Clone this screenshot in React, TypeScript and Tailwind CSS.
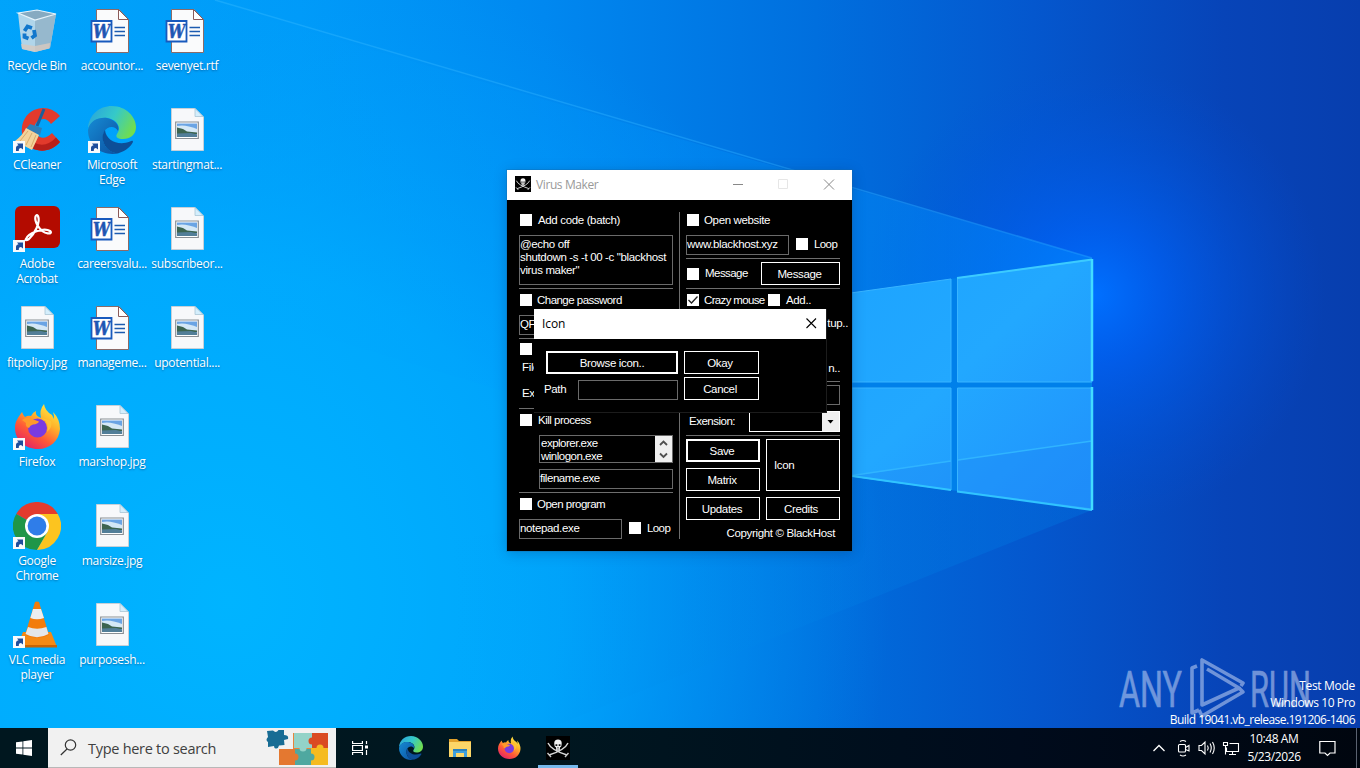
import type { ReactNode } from 'react';

const ui = "font-['Open_Sans','Noto_Sans',sans-serif]";

function Wallpaper() {
  return (
    <svg className="absolute inset-0" width="1360" height="768" viewBox="0 0 1360 768">
      <defs>
        <linearGradient id="base" x1="0" y1="0" x2="1" y2="0">
          <stop offset="0" stopColor="#00a4fb" />
          <stop offset=".22" stopColor="#009af9" />
          <stop offset=".4" stopColor="#0088f0" />
          <stop offset=".6" stopColor="#006fde" />
          <stop offset=".76" stopColor="#0457ce" />
          <stop offset=".9" stopColor="#0744b8" />
          <stop offset="1" stopColor="#073eae" />
        </linearGradient>
        <radialGradient id="glow" gradientUnits="userSpaceOnUse" cx="1095" cy="295" r="230">
          <stop offset="0" stopColor="#0070ff" />
          <stop offset=".3" stopColor="#0062f8" stopOpacity=".7" />
          <stop offset="1" stopColor="#0050d8" stopOpacity="0" />
        </radialGradient>
        <radialGradient id="low" gradientUnits="userSpaceOnUse" cx="230" cy="600" r="660">
          <stop offset="0" stopColor="#00b4ff" />
          <stop offset=".5" stopColor="#00aeff" stopOpacity=".75" />
          <stop offset="1" stopColor="#009cf8" stopOpacity="0" />
        </radialGradient>
        <linearGradient id="beam" gradientUnits="userSpaceOnUse" x1="200" y1="0" x2="1092" y2="0">
          <stop offset="0" stopColor="#00a8ff" stopOpacity="0" />
          <stop offset=".5" stopColor="#0098ff" stopOpacity=".5" />
          <stop offset="1" stopColor="#008cff" stopOpacity=".9" />
        </linearGradient>
        <linearGradient id="ray" gradientUnits="userSpaceOnUse" x1="200" y1="0" x2="1092" y2="0">
          <stop offset="0" stopColor="#30b8ff" stopOpacity=".45" />
          <stop offset="1" stopColor="#20a0ff" stopOpacity=".5" />
        </linearGradient>
        <linearGradient id="floor" gradientUnits="userSpaceOnUse" x1="450" y1="0" x2="1092" y2="0">
          <stop offset="0" stopColor="#0098f0" stopOpacity="0" />
          <stop offset="1" stopColor="#0074e0" stopOpacity=".4" />
        </linearGradient>
        <linearGradient id="pane" gradientUnits="userSpaceOnUse" x1="850" y1="260" x2="1092" y2="510">
          <stop offset="0" stopColor="#1da4ff" />
          <stop offset=".45" stopColor="#22a8ff" />
          <stop offset="1" stopColor="#2090fc" />
        </linearGradient>
      </defs>
      <rect width="1360" height="768" fill="url(#base)" />
      <rect width="1360" height="768" fill="url(#glow)" />
      <rect width="1360" height="768" fill="url(#low)" />
      <path d="M200 0 1092 258V510L600 420 200 300Z" fill="url(#beam)" opacity=".55" />
      <path d="M1092 510 850 476 450 540V768Z" fill="url(#floor)" />
      <path d="M215 0 1092 258" stroke="url(#ray)" strokeWidth="1.500" />
      <path d="M700 316 1092 258V510L700 455Z" fill="#0080ea" />
      <g fill="url(#pane)" stroke="#38b4ff" strokeWidth="1">
        <path d="M700 314 951 279V382H700Z" />
        <path d="M957.500 278 1092 260V382H957.500Z" />
        <path d="M700 388H951V490L700 455Z" />
        <path d="M957.500 388H1092V509L957.500 491Z" />
      </g>
      <path d="M852 476 951 461.500V490ZM958 460.500 1092 441V510L958 491Z" fill="#1c84f4" opacity=".35" />
      <path d="M852 475.500 951 461M958 460 1092 441" stroke="#30b4ff" strokeWidth="1.500" fill="none" />
      <path d="M957 278 1092 259.500" stroke="#3ccbff" strokeWidth="2" />
      <path d="M852 476 951 490M957 491.500 1092 510" stroke="#30c4ff" strokeWidth="2" fill="none" />
      <path d="M1092 259V381M1092 387V510" stroke="#42dcff" strokeWidth="2.500" fill="none" />
    </svg>
  );
}

function Shortcut() {
  return (
    <g>
      <path d="M0 35H12V47H0Z" fill="#f8fafc" />
      <path d="M3 45V41.500Q3.200 39.500 5.500 39.300L4 37.500H10V43.500L8 42Q5.500 42.200 5.800 45Z" fill="#1f4e9c" />
    </g>
  );
}

function Icon48({ children }: { children: ReactNode }) {
  return (
    <svg width="48" height="48" viewBox="0 0 48 48" className="ml-[13px] block shrink-0">
      {children}
    </svg>
  );
}

function RecycleBin() {
  return (
    <Icon48>
      <path d="M5 6 9 42 22 45 37 41 43 7 22 13Z" fill="#c3dae8" opacity=".9" />
      <path d="M22 12 43 7 37 41 22 45Z" fill="#94b5ca" opacity=".9" />
      <path d="M8 37 22 39 37 36 36.500 41.500 22 45 9 42Z" fill="#d8c9bf" opacity=".8" />
      <path d="M5 6 24 3 43 7 22 13Z" fill="#86aac1" stroke="#e8f4fb" strokeWidth="1.200" />
      <g fill="none" stroke="#1277cc" strokeWidth="3.800">
        <path d="M11.500 24 14.500 19.500 19 21" />
        <path d="M21 23 22 28.500 18.500 31" />
        <path d="M15.500 31.500 11.500 30 11.500 26.500" />
      </g>
    </Icon48>
  );
}

function WordFile() {
  return (
    <Icon48>
      <path d="M8.500 2.500H31L40.500 12.500V45.500H8.500Z" fill="#fafbfc" stroke="#8b6b68" strokeWidth="1" />
      <path d="M30.500 2.500V12.500H40.500Z" fill="#fff" stroke="#8b5a58" strokeWidth="1" />
      <path d="M26.500 20.500H37M26.500 24.500H37M26.500 28.500H37" stroke="#1c5bb0" strokeWidth="1.400" />
      <path d="M3.500 14H23.500V34.500H3.500Z" fill="#fff" stroke="#185abd" strokeWidth="1.800" />
      <text x="13.600" y="30.500" textAnchor="middle" textLength="17" lengthAdjust="spacingAndGlyphs" fontFamily="DejaVu Serif, serif" fontWeight="700" fontStyle="italic" fontSize="18" fill="#1f56b3" stroke="#1f56b3" strokeWidth=".5">W</text>
    </Icon48>
  );
}

function ImageFile() {
  return (
    <Icon48>
      <path d="M8.500 2.500H32L40.500 11V44.500H8.500Z" fill="#f7f8fa" stroke="#c7d0d8" strokeWidth="1" />
      <path d="M32 2.500V10.500H40Z" fill="#d4eefc" stroke="#a8c4d4" strokeWidth=".8" />
      <path d="M12.700 16H35.300V32.500H12.700Z" fill="#fff" stroke="#8a8f94" strokeWidth="1.200" />
      <path d="M14 17.500H34V31H14Z" fill="#6aa4e4" />
      <path d="M14 20Q22 18 34 23V27H14Z" fill="#d4e8f6" />
      <path d="M14 21.500 20 23 24 25.500 34 26.500V28H14Z" fill="#3c6450" />
      <path d="M14 27.500 28 27 34 28.500V31H14Z" fill="#527e98" />
    </Icon48>
  );
}

function CCleaner() {
  return (
    <Icon48>
      <path d="M47 10Q36-2 21 4C8 10 6 27 12 36 20 47 37 48 47 36L39 27Q30 36 23 28 19 17 27 14 33 11 38 18Z" fill="#e23a2c" />
      <path d="M12 36C20 47 37 48 47 36L43 31.500Q32 43 20 36Z" fill="#b81f1a" />
      <path d="M31 3 24 20" stroke="#1d5f9b" strokeWidth="3" />
      <path d="M17 18 29 22 27 29 13 23Z" fill="#2f7fb9" />
      <path d="M13 22 26 29Q21 40 19 44L2 35Q10 29 13 22Z" fill="#f3d39c" />
      <path d="M15 25 7 35M19 27 13 39M23 29 18 41" stroke="#d9ac6c" strokeWidth="1" />
      <Shortcut />
    </Icon48>
  );
}

function EdgeArt({ id }: { id: string }) {
  return (
    <>
      <defs>
        <linearGradient id={id + 't'} x1="0" y1=".2" x2="1" y2=".6">
          <stop offset="0" stopColor="#2aa5dc" />
          <stop offset=".5" stopColor="#35c9c9" />
          <stop offset="1" stopColor="#72de4c" />
        </linearGradient>
        <linearGradient id={id + 'b'} x1="0" y1="0" x2="1" y2="1">
          <stop offset="0" stopColor="#168bd4" />
          <stop offset="1" stopColor="#0c50a0" />
        </linearGradient>
      </defs>
      <path d="M0 22C1 9 11 0 24 0 38 0 48 11 48 21 48 29 42 33 35 33 30 33 27 31 29 28 34 21 29 14 20 12 11 11 4 15 0 22Z" fill={`url(#${id}t)`} />
      <path d="M0 24C2 14 11 11 19 12 28 14 32 20 30 25 27 19 19 20 16 26 12 37 20 48 31 47 17 51 0 42 0 24Z" fill={`url(#${id}b)`} />
      <path d="M17 24C10 34 20 49 31 47 38 45 43 40 45 36 45 34 43 35 42 35.500 31 40 18 35 17 24Z" fill="#0d4f98" />
    </>
  );
}

function Acrobat() {
  return (
    <Icon48>
      <rect x="2" y="1" width="45" height="42" rx="6" fill="#b30b00" />
      <path d="M13 34C15 28 31 22 37 26 41 29 31 31 25 21 20 13 23 8 25 11 28 18 21 29 16 34 13 36 12 35 13 34Z" fill="none" stroke="#fff" strokeWidth="2.200" />
      <Shortcut />
    </Icon48>
  );
}

function FirefoxArt({ id }: { id: string }) {
  return (
    <>
      <defs>
        <linearGradient id={id} x1=".85" y1="0" x2=".2" y2="1">
          <stop offset="0" stopColor="#fff24a" />
          <stop offset=".35" stopColor="#ffb32a" />
          <stop offset=".65" stopColor="#ff5a36" />
          <stop offset="1" stopColor="#e01c6c" />
        </linearGradient>
      </defs>
      <path d="M9 9Q10 12 12 14 15 12 18 13 20 9 23 8 22 12 26 14L28 15Q26 7 31 1 32 8 39 12L41 16Q41 11 40 9 47 16 47 26C46 38 37 46 25 46 12 46 2 37 2 25 2 18 5 15 9 9Z" fill={`url(#${id})`} />
      <circle cx="24.500" cy="25" r="9.500" fill="#7a3be0" />
      <path d="M9 17Q14 13 19 16L26 18.500Q25 21 20 21.500 17 22 16 25 12 24 13 20Z" fill="#ff9a2a" />
      <path d="M29 15Q37 20 34 29 40 24 38 18Z" fill="#ffc637" opacity=".8" />
    </>
  );
}

function Chrome() {
  return (
    <Icon48>
      <path d="M24 24 3.200 12A24 24 0 0 1 44.800 12Z" fill="#e33b2e" />
      <path d="M3.200 12A24 24 0 0 0 24 48L34.400 30Z" fill="#1f9648" />
      <path d="M24 12H44.800A24 24 0 0 1 24 48L34.400 30Z" fill="#fcc41f" />
      <circle cx="24" cy="24" r="12" fill="#fff" />
      <circle cx="24" cy="24" r="9.400" fill="#2f7de9" />
      <Shortcut />
    </Icon48>
  );
}

function Vlc() {
  return (
    <Icon48>
      <path d="M10 31H38L44 46H4Z" fill="#f58a14" />
      <path d="M4 44H44V46.500H4Z" fill="#c96403" />
      <path d="M22 1Q24 0 26 1L36 34Q24 40 12 34Z" fill="#f27c0c" />
      <path d="M20 8H28L31 17Q24 19.500 17.300 17Z" fill="#eceeef" />
      <path d="M15 26Q24 29.500 33.400 26L35.500 33Q24 39.500 12.500 33Z" fill="#e4e7e9" />
      <Shortcut />
    </Icon48>
  );
}

function Skull({ size }: { size: number }) {
  return (
    <svg width={size} height={size} viewBox="0 0 24 24" className="block shrink-0">
      <rect width="24" height="24" fill="#000" />
      <path d="M2 7Q5 14 21 19M22 7Q19 14 3 19" fill="none" stroke="#d8d8d8" strokeWidth="1.400" />
      <path d="M1.500 17 5 21M22.500 17 19 21" stroke="#c8c8c8" strokeWidth="1.400" />
      <path d="M12 3.500C7.500 3.500 8 8 8.800 10.500L10 11.500V14Q12 15.300 14 14V11.500L15.200 10.500C16 8 16.500 3.500 12 3.500Z" fill="#f2f2f2" />
      <path d="M9.500 8.200H11.300V10H9.500ZM12.700 8.200H14.500V10H12.700ZM11.600 11H12.400V12H11.600ZM10.500 12.800H13.500V13.200H10.500Z" fill="#111" />
    </svg>
  );
}

const desktop: [string, () => ReactNode][] = [
  ['Recycle Bin', RecycleBin],
  ['CCleaner', CCleaner],
  ['Adobe Acrobat', Acrobat],
  ['fitpolicy.jpg', ImageFile],
  ['Firefox', () => <Icon48><FirefoxArt id="ff1" /><Shortcut /></Icon48>],
  ['Google Chrome', Chrome],
  ['VLC media player', Vlc],
  ['accountor...', WordFile],
  ['Microsoft Edge', () => <Icon48><EdgeArt id="e1" /><Shortcut /></Icon48>],
  ['careersvalu...', WordFile],
  ['manageme...', WordFile],
  ['marshop.jpg', ImageFile],
  ['marsize.jpg', ImageFile],
  ['purposesh...', ImageFile],
  ['sevenyet.rtf', WordFile],
  ['startingmat...', ImageFile],
  ['subscribeor...', ImageFile],
  ['upotential....', ImageFile],
];

function Check({ on }: { on?: boolean }) {
  return (
    <span className="block size-3 shrink-0 bg-white">
      {on && (
        <svg width="12" height="12" viewBox="0 0 12 12" className="block">
          <path d="M1.500 6 4.500 9 10.500 2.500" fill="none" stroke="#222" strokeWidth="1.300" />
        </svg>
      )}
    </span>
  );
}

function Option({ label, on, className = 'gap-1.5' }: { label: string; on?: boolean; className?: string }) {
  return (
    <div className={'flex h-3 items-center pl-px ' + className}>
      <Check on={on} />
      <span>{label}</span>
    </div>
  );
}

function Rule({ className = '' }: { className?: string }) {
  return <div className={'h-px shrink-0 bg-[#6e6e6e] ' + className} />;
}

function Field({ children, className = '' }: { children?: ReactNode; className?: string }) {
  return <div className={'h-5 shrink-0 border border-[#6a6a6a] leading-[17px] ' + className}>{children}</div>;
}

function Button({ label, className = 'border' }: { label: string; className?: string }) {
  return <button className={'flex items-center justify-center border-white pt-px ' + className}>{label}</button>;
}

function MainWindow() {
  return (
    <section className="absolute left-[507px] top-[170px] h-[381px] w-[345px] bg-black font-['Liberation_Sans',Arial,sans-serif] text-[11.5px] leading-[13px] tracking-[-0.35px] whitespace-nowrap text-white shadow-[0_0_0_1px_#1468a855,0_2px_12px_#00205040]">
      <header className={`flex h-[30px] items-center bg-white pl-2 text-xs tracking-[-0.4px] text-[#999] ${ui}`}>
        <span className="pb-0.5"><Skull size={16} /></span>
        <span className="ml-[5px]">Virus Maker</span>
        <svg className="mr-[5px] mb-0.5 ml-auto" width="120" height="12" viewBox="0 0 120 12" fill="none">
          <path d="M6 6.500H16" stroke="#888" />
          <path d="M51.500 1.500H60.500V10.500H51.500Z" stroke="#e6e6e6" />
          <path d="M97 1.500 107 11.500M107 1.500 97 11.500" stroke="#888" />
        </svg>
      </header>
      <div className="flex h-[351px] pl-3">
        <div className="flex w-[154px] flex-col">
          <Option label="Add code (batch)" className="mt-3.5 gap-1.5" />
          <div className="mt-[9px] h-[50px] border border-[#6a6a6a] pt-[2px] whitespace-pre">{'@echo off\nshutdown -s -t 00 -c "blackhost\nvirus maker"'}</div>
          <Rule className="mt-[3px]" />
          <Option label="Change password" className="mt-[5px] gap-[5px] tracking-[-0.53px]" />
          <Field className="mt-[9px]">QF</Field>
          <Rule className="mt-[3px]" />
          <div className="mt-1 pl-px"><Check /></div>
          <div className="mt-1.5 h-3.5 pl-[3px]">File</div>
          <div className="mt-3 h-3.5 pl-[3px]">Ex</div>
          <Rule className="mt-[7px]" />
          <Option label="Kill process" className="mt-[5px] gap-1.5 tracking-[-0.5px]" />
          <div className="mt-[9px] ml-5 flex h-7 shrink-0 border border-[#6a6a6a] pl-px">
            <div className="flex-1 pt-px tracking-[-0.5px]">explorer.exe<br />winlogon.exe</div>
            <svg width="17" height="26" viewBox="0 0 17 26" className="bg-[#f0f0f0]">
              <path d="M5 9 8.500 5.500 12 9M5 17.500 8.500 21 12 17.500" fill="none" stroke="#505050" strokeWidth="1.800" />
            </svg>
          </div>
          <Field className="mt-1.5 ml-5 tracking-[-0.45px]">filename.exe</Field>
          <Rule className="mt-[3px]" />
          <Option label="Open program" className="mt-[5px] gap-[5px] tracking-[-0.5px]" />
          <div className="mt-[9px] flex">
            <Field className="w-[103px]">notepad.exe</Field>
            <Option label="Loop" className="mt-[3px] ml-1.5 gap-1.5 tracking-[-0.6px]" />
          </div>
        </div>
        <div className="mt-3 ml-1.5 h-[327px] w-px bg-[#6e6e6e]" />
        <div className="ml-1.5 flex w-[154px] flex-col">
          <Option label="Open website" className="mt-3.5 gap-[5px]" />
          <div className="mt-[9px] flex">
            <Field className="w-[103px]">www.blackhost.xyz</Field>
            <Option label="Loop" className="mt-[3px] ml-1.5 gap-1.5 tracking-[-0.6px]" />
          </div>
          <Rule className="mt-[3px]" />
          <div className="mt-[3px] flex h-[23px] items-center justify-between">
            <Option label="Message" className="gap-1.5 tracking-[-0.55px]" />
            <Button label="Message" className="h-[23px] w-[79px] border pr-0.5" />
          </div>
          <Rule className="mt-[3px]" />
          <div className="mt-[5px] flex">
            <Option label="Crazy mouse" on className="w-[81px] gap-[5px] tracking-[-0.65px]" />
            <Option label="Add.." />
          </div>
          <div className="mt-[11px] h-3.5 w-[162px] text-right">tup..</div>
          <div className="mt-[31px] h-3.5 text-right">n..</div>
          <Rule className="mt-[5px]" />
          <Field className="mt-[3px]" />
          <div className="mt-1.5 flex h-[21px] shrink-0">
            <span className="w-[63px] pt-[4px] pl-[3px] tracking-[-0.5px]">Exension:</span>
            <div className="flex flex-1 justify-end border border-white">
              <svg width="17" height="19" viewBox="0 0 17 19" className="bg-[#f0f0f0]">
                <path d="M5.500 8H11.500L8.500 11.500Z" fill="#000" />
              </svg>
            </div>
          </div>
          <Rule className="mt-[3px]" />
          <div className="mt-[3px] grid h-[81px] shrink-0 grid-cols-2 grid-rows-3 gap-1.5">
            <Button label="Save" className="border-2 pr-0.5" />
            <button className="row-span-2 h-[52px] border border-white pl-[7px] text-left">Icon</button>
            <Button label="Matrix" className="border pr-0.5" />
            <Button label="Updates" className="border pr-0.5" />
            <Button label="Credits" className="border pr-1" />
          </div>
          <div className="mt-[7px] pr-[5px] text-right">Copyright © BlackHost</div>
        </div>
      </div>
    </section>
  );
}

function IconDialog() {
  return (
    <section className="absolute left-[534px] top-[309px] h-[104px] w-[293px] border-r border-b border-[#1c1c1c] bg-black font-['Liberation_Sans',Arial,sans-serif] text-[11.5px] leading-[13px] tracking-[-0.35px] text-white">
      <header className={`flex h-[30px] w-[292px] items-center justify-between bg-white pr-[9px] pl-2 text-xs tracking-[-0.1px] text-black ${ui}`}>
        <span>Icon</span>
        <svg width="12" height="12" viewBox="0 0 12 12">
          <path d="M1.500 .5 11 10M11 .5 1.500 10" stroke="#000" strokeWidth="1.100" />
        </svg>
      </header>
      <div className="grid grid-cols-[132px_75px] gap-x-1.5 gap-y-[3px] pt-3 pl-3">
        <Button label="Browse icon.." className="h-[23px] border-2" />
        <Button label="Okay" className="h-[23px] border pr-[3px]" />
        <div className="flex h-[23px] items-end">
          <span className="w-8 -translate-x-0.5 pb-1">Path</span>
          <Field className="flex-1" />
        </div>
        <Button label="Cancel" className="h-[23px] border pr-[3px]" />
      </div>
    </section>
  );
}

function Watermark() {
  return (
    <svg className="absolute left-[1110px] top-[650px]" width="210" height="78" viewBox="1110 650 210 78" opacity=".55">
      <g fill="#c4d4f4" stroke="#c4d4f4" strokeWidth=".6" fontFamily="Roboto, sans-serif" fontWeight="400" fontSize="50">
        <text x="1119" y="707" textLength="63" lengthAdjust="spacingAndGlyphs">ANY</text>
        <text x="1250" y="707" textLength="61" lengthAdjust="spacingAndGlyphs">RUN</text>
      </g>
      <g fill="none" stroke="#c4d4f4" strokeWidth="3.600" strokeLinejoin="round">
        <path d="M1197 666 1192 668V713L1199 710" />
        <path d="M1241 686 1243 683 1202 660V705L1239 688 1207 669" />
        <path d="M1199 710 1202 716 1243 692 1239 688" />
      </g>
    </svg>
  );
}

function Taskbar() {
  return (
    <footer className={`relative mt-auto flex h-10 items-center bg-[linear-gradient(90deg,#00171f,#001720_40%,#000b1c_75%,#00060f)] text-white ${ui}`}>
      <svg className="ml-4 shrink-0" width="16" height="16" viewBox="0 0 16 16" fill="#fff">
        <path d="M0 2.300 6.500 1.400V7.600H0ZM7.300 1.300 16 0V7.600H7.300ZM0 8.400H6.500V14.600L0 13.700ZM7.300 8.400H16V16L7.300 14.700Z" />
      </svg>
      <div className="ml-4 flex h-10 w-[288px] shrink-0 items-center border-b border-[#b8b8b8] bg-[#f1f1f1] pl-3 text-[#404040]">
        <svg width="17" height="17" viewBox="0 0 17 17" fill="none" stroke="#333" strokeWidth="1.200">
          <circle cx="10.500" cy="6" r="5.200" />
          <path d="M7 10 .8 16" />
        </svg>
        <span className="ml-[11px] pt-0.5 text-[14.500px] tracking-[-0.28px] whitespace-nowrap">Type here to search</span>
        <svg className="ml-auto mr-[8px]" width="62" height="38" viewBox="0 0 62 38">
          <path d="M27 4H62V36H13V22H27Z" fill="#e8843c" />
          <path d="M28 4H46V19H28Z" fill="#93d3c8" />
          <path d="M46 4H62V19H46Z" fill="#da4b22" />
          <path d="M13 20H29V36H13Z" fill="#e47830" />
          <path d="M29 20H45V36H29Z" fill="#4fa8a0" />
          <path d="M45 19H62V36H45Z" fill="#f5bb20" />
          <circle cx="37" cy="19" r="3.500" fill="#93d3c8" />
          <circle cx="46" cy="12" r="3.500" fill="#da4b22" />
          <circle cx="45" cy="28" r="3.500" fill="#4fa8a0" />
          <circle cx="29" cy="28" r="3.500" fill="#e47830" />
          <circle cx="54" cy="19" r="3.500" fill="#f5bb20" />
          <path d="M1 2 7 1.500Q10 4.500 12.500 1L18 1V6Q23 6 22 10L18 11 18.500 16 13 16.500Q12 21 8.500 19L8 17 2 18V13Q-1 11 2 8Z" fill="#176c94" />
        </svg>
      </div>
      <svg className="ml-4 shrink-0" width="17" height="16" viewBox="0 0 17 16" fill="none" stroke="#fff" strokeWidth="1.200">
        <path d="M.6 1V3.500H10.400V1M.6 15V12.500H10.400V15M.6 5.500H10.400V10.500H.6ZM14.500 1V4M14.500 10V15" />
        <path d="M13 5.500H16V8.500H13Z" fill="#fff" stroke="none" />
      </svg>
      <svg className="ml-[30px] shrink-0" width="24" height="24" viewBox="0 0 48 48"><EdgeArt id="e2" /></svg>
      <svg className="ml-[26px] shrink-0" width="22" height="20" viewBox="0 0 22 20">
        <path d="M0 1H8L10 3H22V19H0Z" fill="#e2a12b" />
        <path d="M0 4H22V19H0Z" fill="#fcd668" />
        <path d="M4 19V11H18V19H15V15H7V19Z" fill="#3f9fdc" />
        <path d="M4 11H18V13H4Z" fill="#2980bd" />
      </svg>
      <svg className="ml-[26px] shrink-0" width="24" height="24" viewBox="0 0 48 48"><FirefoxArt id="ff2" /></svg>
      <div className="ml-[17px] flex h-10 w-10 shrink-0 items-center justify-center border-b-[3px] border-[#76b9ed] pt-[3px]">
        <Skull size={24} />
      </div>
      <svg className="ml-auto" width="88" height="20" viewBox="0 0 88 20" fill="none" stroke="#fff" strokeWidth="1.100">
        <path d="M1.500 13 7 7.500 12.500 13" strokeWidth="1.300" />
        <rect x="26.500" y="6.500" width="7" height="7.500" rx="1" />
        <path d="M33.500 9.500 37 7.500V13L33.500 11.500M28 3.500Q31 1.500 34 3.500M28 17Q31 19 34 17" />
        <path d="M47 7.500H49.500L53 4V16L49.500 12.500H47ZM55.500 7.500Q57 10 55.500 12.500M58 5.500Q60.500 10 58 14.500M60.500 4Q64 10 60.500 16" />
        <path d="M71.500 4.500H75.500V7.500H71.500ZM77.500 5.500H86.500V13.500H74.500V9.500M73.500 7.500V16.500M80.500 13.500V16.500M77 16.500H84" />
      </svg>
      <div className="ml-[6px] w-[56px] text-center text-xs leading-[18px] tracking-[-0.4px] whitespace-nowrap">
        <div>10:48 AM</div>
        <div className="-mx-2">5/23/2026</div>
      </div>
      <svg className="mr-5 ml-[17px]" width="17" height="17" viewBox="0 0 17 17" fill="none" stroke="#fff" strokeWidth="1.200">
        <path d="M.8 1.500H16V13H11L8.500 15.500 6 13H.8Z" />
      </svg>
      <div className="mr-[3px] h-10 w-px bg-[#5a6270]" />
    </footer>
  );
}

export default function App() {
  return (
    <main className="relative flex h-[768px] w-[1360px] flex-col overflow-hidden">
      <Wallpaper />
      <div className={`relative grid w-max grid-flow-col auto-cols-[75px] grid-rows-[repeat(7,99px)] pt-[7px] text-xs leading-[15px] tracking-[-0.3px] text-white ${ui}`}>
        {desktop.map(([label, Glyph]) => (
          <div key={label} className="flex flex-col">
            <Glyph />
            <span className="mt-[3px] -ml-px w-[76px] px-1.5 text-center [text-shadow:0_1px_2px_#003a7090]">
              {label.includes('.') || label === 'Recycle Bin' ? <span className="-mx-3 block whitespace-nowrap">{label}</span> : label}
            </span>
          </div>
        ))}
      </div>
      <Watermark />
      <div className={`absolute top-[677px] right-[5px] text-right text-xs leading-[17px] whitespace-nowrap text-white ${ui}`}>
        <div className="tracking-[-0.3px]">Test Mode</div>
        <div className="tracking-[-0.4px]">Windows 10 Pro</div>
        <div className="tracking-[-0.55px]">Build 19041.vb_release.191206-1406</div>
      </div>
      <MainWindow />
      <IconDialog />
      <Taskbar />
    </main>
  );
}
